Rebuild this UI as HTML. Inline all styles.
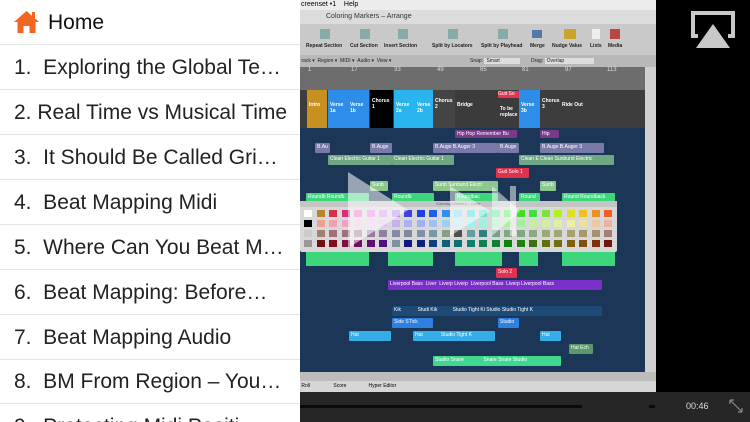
<!DOCTYPE html>
<html><head><meta charset="utf-8"><style>
*{margin:0;padding:0;box-sizing:border-box}
html{overflow:hidden;width:750px;height:422px}
body{width:750px;height:422px;overflow:hidden;background:#000;position:relative;font-family:"Liberation Sans",sans-serif}
.a{position:absolute}
#side{left:0;top:0;width:300px;height:422px;background:#fff;overflow:hidden}
.row{position:absolute;left:0;width:300px;height:45px;border-bottom:1px solid #e4e4e4;font-size:21px;color:#222;line-height:45px;padding-left:14px;white-space:nowrap;overflow:hidden}
.r{position:absolute;font-size:5px;color:#fff;padding:1px 2px;overflow:hidden;white-space:nowrap;border-radius:1px}
.m{position:absolute;top:90px;height:38px;font-size:5px;font-weight:bold;color:#fff;padding:12px 2px;overflow:hidden}
.sw{position:absolute;width:8px;height:7px}
</style></head><body>
<div id="side" class="a">
 <div class="row" style="top:0;padding-left:48px;font-size:21px;color:#111">Home
  <svg class="a" style="left:14px;top:11px" width="25" height="22" viewBox="0 0 25 22"><path d="M12.5 0 L25 11 L21.5 11 L21.5 22 L15.5 22 L15.5 15 L9.5 15 L9.5 22 L3.5 22 L3.5 11 L0 11 Z" fill="#f26522"/><rect x="18" y="1" width="3" height="6" fill="#f26522"/></svg>
 </div>
 <div class="row" style="top:45px">1.&nbsp; Exploring the Global Te…</div>
 <div class="row" style="top:90px">2.&nbsp;Real Time vs Musical Time</div>
 <div class="row" style="top:135px">3.&nbsp; It Should Be Called Gri…</div>
 <div class="row" style="top:180px">4.&nbsp; Beat Mapping Midi</div>
 <div class="row" style="top:225px">5.&nbsp; Where Can You Beat M…</div>
 <div class="row" style="top:270px">6.&nbsp; Beat Mapping: Before…</div>
 <div class="row" style="top:315px">7.&nbsp; Beat Mapping Audio</div>
 <div class="row" style="top:359px">8.&nbsp; BM From Region – You…</div>
 <div class="row" style="top:404px;height:18px;border:0">9.&nbsp; Protecting Midi Positi…</div>
</div>
<div id="vid" class="a" style="left:300px;top:0;width:356px;height:392px;background:#1c3657;overflow:hidden">
 <div class="a" style="left:0;top:0;width:356px;height:10px;background:#ececec;font-size:7px;padding-left:1px;line-height:10px">creenset •1 &nbsp;&nbsp; Help</div>
 <div class="a" style="left:0;top:10px;width:356px;height:14px;background:#dcdcdc;font-size:7px;padding-left:26px;line-height:14px;color:#333">Coloring Markers – Arrange</div>
 <div class="a" style="left:0;top:24px;width:356px;height:31px;background:#c9c9c9;font-size:5px;font-weight:bold;color:#222">
  <span class="a" style="left:6px;top:19px">Repeat Section</span><span class="a" style="left:50px;top:19px">Cut Section</span><span class="a" style="left:84px;top:19px">Insert Section</span><span class="a" style="left:132px;top:19px">Split by Locators</span><span class="a" style="left:181px;top:19px">Split by Playhead</span><span class="a" style="left:230px;top:19px">Merge</span><span class="a" style="left:252px;top:19px">Nudge Value</span><span class="a" style="left:290px;top:19px">Lists</span><span class="a" style="left:308px;top:19px">Media</span>
  <div class="a" style="left:20px;top:5px;width:10px;height:10px;background:#8aa"></div><div class="a" style="left:60px;top:5px;width:10px;height:10px;background:#8aa"></div><div class="a" style="left:98px;top:5px;width:10px;height:10px;background:#8aa"></div><div class="a" style="left:148px;top:5px;width:10px;height:10px;background:#8aa"></div><div class="a" style="left:198px;top:5px;width:10px;height:10px;background:#8aa"></div><div class="a" style="left:232px;top:6px;width:10px;height:8px;background:#5577aa"></div><div class="a" style="left:264px;top:5px;width:12px;height:10px;background:#c9a530"></div><div class="a" style="left:292px;top:5px;width:8px;height:10px;background:#eee"></div><div class="a" style="left:310px;top:5px;width:10px;height:10px;background:#b44"></div>
 </div>
 <div class="a" style="left:0;top:55px;width:356px;height:12px;background:#b8b8b8;font-size:5px;line-height:12px;color:#222">&nbsp;rack ▾ &nbsp;Region ▾ &nbsp;MIDI ▾ &nbsp;Audio ▾ &nbsp;View ▾<span class="a" style="left:170px">Snap: <span style="background:#ddd;padding:0 20px 0 2px">Smart</span></span><span class="a" style="left:231px">Drag: <span style="background:#ddd;padding:0 30px 0 2px">Overlap</span></span></div>
 <div class="a" style="left:0;top:67px;width:345px;height:23px;background:#6d6d6d;font-size:6px;color:#ddd">
  <span class="a" style="left:8px">1</span><span class="a" style="left:51px">17</span><span class="a" style="left:94px">33</span><span class="a" style="left:137px">49</span><span class="a" style="left:180px">65</span><span class="a" style="left:222px">81</span><span class="a" style="left:265px">97</span><span class="a" style="left:307px">113</span></div>
 <div class="a" style="left:0;top:90px;width:345px;height:38px;background:#3d3d3d"></div>
 <div class="m" style="left:7px;width:20px;background:#c8901f">Intro</div>
 <div class="m" style="left:28px;width:20px;background:#2d8de8">Verse 1a</div>
 <div class="m" style="left:48px;width:21px;background:#2d8de8">Verse 1b</div>
 <div class="m" style="left:70px;width:23px;background:#000;padding-top:8px">Chorus 1</div>
 <div class="m" style="left:94px;width:21px;background:#29b4ee">Verse 2a</div>
 <div class="m" style="left:115px;width:18px;background:#29b4ee">Verse 2b</div>
 <div class="m" style="left:133px;width:22px;background:#444;padding-top:8px">Chorus 2</div>
 <div class="m" style="left:155px;width:43px;background:#3b3b3b">Bridge</div>
 <div class="m" style="left:198px;width:21px;background:#3b3b3b;padding-top:16px">To be replace</div>
 <div class="a" style="left:198px;top:91px;width:21px;height:7px;background:#e8334f;font-size:5px;color:#fff">Guit So</div>
 <div class="m" style="left:219px;width:21px;background:#2d8de8">Verse 3b</div>
 <div class="m" style="left:240px;width:20px;background:#3d3d3d;padding-top:8px">Chorus 3</div>
 <div class="m" style="left:260px;width:85px;background:#3d3d3d">Ride Out</div>
 <div class="a" style="left:345px;top:67px;width:11px;height:305px;background:#d0d0d0"></div>
 <div class="r" style="left:155px;top:130px;width:62px;height:8px;background:#7a3a8a">Hip Hop Remember Bu</div>
 <div class="r" style="left:240px;top:130px;width:19px;height:8px;background:#7a3a8a">Hip</div>
 <div class="r" style="left:15px;top:143px;width:15px;height:10px;background:#7a7aaa">B.Au</div>
 <div class="r" style="left:70px;top:143px;width:22px;height:10px;background:#7a7aaa">B.Auge</div>
 <div class="r" style="left:133px;top:143px;width:65px;height:10px;background:#7a7aaa">B.Auge B.Auger 3</div>
 <div class="r" style="left:198px;top:143px;width:21px;height:10px;background:#7a7aaa">B.Auge</div>
 <div class="r" style="left:240px;top:143px;width:64px;height:10px;background:#7a7aaa">B.Auge B.Auger 3</div>
 <div class="r" style="left:28px;top:155px;width:64px;height:10px;background:#6fa684">Clean Electric Guitar 1</div>
 <div class="r" style="left:92px;top:155px;width:62px;height:10px;background:#6fa684">Clean Electric Guitar 1</div>
 <div class="r" style="left:219px;top:155px;width:95px;height:10px;background:#6fa684">Clean E Clean Sunburst Electric</div>
 <div class="r" style="left:196px;top:168px;width:33px;height:10px;background:#e0324e">Guit Solo 1</div>
 <div class="r" style="left:70px;top:181px;width:18px;height:10px;background:#8ec88e">Sunb</div>
 <div class="r" style="left:133px;top:181px;width:65px;height:10px;background:#8ec88e">Sunb Sunburst Electr</div>
 <div class="r" style="left:240px;top:181px;width:16px;height:10px;background:#8ec88e">Sunb</div>
 <div class="r" style="left:6px;top:193px;width:63px;height:10px;background:#3ed67a">Roundb Roundb</div>
 <div class="r" style="left:92px;top:193px;width:42px;height:10px;background:#3ed67a">Roundb</div>
 <div class="r" style="left:155px;top:193px;width:43px;height:10px;background:#3ed67a">Roundbac</div>
 <div class="r" style="left:219px;top:193px;width:21px;height:10px;background:#3ed67a">Round</div>
 <div class="r" style="left:262px;top:193px;width:53px;height:10px;background:#3ed67a">Round Roundback</div>
 <div class="a" style="left:6px;top:252px;width:63px;height:14px;background:#3ed67a"></div>
 <div class="a" style="left:88px;top:252px;width:45px;height:14px;background:#3ed67a"></div>
 <div class="a" style="left:155px;top:252px;width:47px;height:14px;background:#3ed67a"></div>
 <div class="a" style="left:219px;top:252px;width:19px;height:14px;background:#3ed67a"></div>
 <div class="a" style="left:262px;top:252px;width:53px;height:14px;background:#3ed67a"></div>
 <div class="r" style="left:196px;top:268px;width:21px;height:10px;background:#e0324e">Solo 2</div>
 <div class="r" style="left:88px;top:280px;width:214px;height:10px;background:#7a30c8">Liverpool Bass &nbsp;Liver &nbsp;Liverp Liverp &nbsp;Liverpool Bass &nbsp;Liverp Liverpool Bass</div>
 <div class="r" style="left:92px;top:306px;width:210px;height:10px;background:#1e4a78">Kik &nbsp;&nbsp;&nbsp;&nbsp;&nbsp;&nbsp;&nbsp;&nbsp;&nbsp;&nbsp;&nbsp;Studi Kik &nbsp;&nbsp;&nbsp;&nbsp;&nbsp;&nbsp;&nbsp;&nbsp;&nbsp;&nbsp;Studio Tight Ki Studio Studio Tight K</div>
 <div class="r" style="left:92px;top:318px;width:41px;height:10px;background:#2f7fe0">Side STick</div>
 <div class="r" style="left:198px;top:318px;width:21px;height:10px;background:#2f7fe0">Studio</div>
 <div class="r" style="left:49px;top:331px;width:42px;height:10px;background:#35aee8">Hat</div>
 <div class="r" style="left:113px;top:331px;width:82px;height:10px;background:#35aee8">Hat &nbsp;&nbsp;&nbsp;&nbsp;&nbsp;&nbsp;&nbsp;&nbsp;&nbsp;&nbsp;&nbsp;&nbsp;Studio Tight K</div>
 <div class="r" style="left:240px;top:331px;width:21px;height:10px;background:#35aee8">Hat</div>
 <div class="r" style="left:269px;top:344px;width:24px;height:10px;background:#5a9a6a">Hat Ech</div>
 <div class="r" style="left:133px;top:356px;width:128px;height:10px;background:#40d890">Studio Snare &nbsp;&nbsp;&nbsp;&nbsp;&nbsp;&nbsp;&nbsp;&nbsp;&nbsp;&nbsp;&nbsp;&nbsp;&nbsp;Snare Snare Studio</div>
 <div class="a" style="left:0;top:201px;width:317px;height:51px;background:#d8d8d8;border-radius:2px">
  <div class="a" style="left:0;top:0;width:317px;height:6px;background:#c4c4c4;font-size:4px;color:#555;text-align:center">Coloring Markers – Color</div>
  <div class="a" id="pal" style="left:4px;top:9px"></div>
 </div>
 <svg class="a" style="left:40px;top:170px;z-index:5" width="180" height="80"><path d="M8 2 L8 78 L68 40 Z" fill="rgba(255,255,255,0.55)"/><path d="M110 16 L110 66 L150 41 Z M152 16 L152 66 L180 41 Z" fill="rgba(255,255,255,0.5)"/><rect x="170" y="16" width="6" height="50" fill="rgba(255,255,255,0.5)"/></svg>
 <div class="a" style="left:0;top:372px;width:356px;height:9px;background:#bcbcbc"></div>
 <div class="a" style="left:0;top:381px;width:356px;height:11px;background:#d6d6d6;font-size:5px;line-height:11px">&nbsp;Roll <span style="margin-left:22px">Score</span><span style="margin-left:22px">Hyper Editor</span></div>
</div>
<svg class="a" style="left:688px;top:8px" width="50" height="42" viewBox="0 0 50 42"><path d="M3 3 H47 V30 H40 V26 H43 V7 H7 V26 H10 V30 H3 Z" fill="#c8c8c8"/><path d="M25 16 L42 40 H8 Z" fill="#c8c8c8"/></svg>
<div class="a" style="left:300px;top:392px;width:450px;height:30px;background:#262626">
 <div class="a" style="left:0;top:13px;width:282px;height:3px;background:#0a0a0a"></div>
 <div class="a" style="left:349px;top:13px;width:6px;height:3px;background:#0a0a0a"></div>
 <div class="a" style="left:386px;top:9px;font-size:9px;color:#ddd">00:46</div>
 <svg class="a" style="left:428px;top:6px" width="16" height="16"><path d="M2 2 L14 14 M2 2 V6 M2 2 H6 M14 14 V10 M14 14 H10" stroke="#888" stroke-width="1.2" fill="none"/></svg>
</div>
<script>
var cols=[["#fff","#b8862a","#d8304a","#d83078","#f070c8","#f080e8","#d890f0","#b080f0","#4040e0","#2040e0","#2060e0","#3090f0","#80d8f8","#50d8e0","#60e8d0","#60e8a0","#60f060","#40e020","#40e040","#80e040","#b0f020","#e0e020","#f0c020","#f09020","#f06020"],
["#000","#f0a090","#f0a0b0","#f0a0c0","#f0c0e0","#f0c0f0","#e0c0f0","#c8b0f0","#b0b0f0","#a0b0f0","#a0c0f0","#a0d0f0","#b0e8f8","#a0f0f0","#a0f0e0","#a0f0c0","#b0f0a0","#a0f0a0","#c0f0a0","#d0f0a0","#e0f0a0","#f0f0a0","#f0e0a0","#f0c8a0","#f0b0a0"],
["#ccc","#a08070","#a07078","#a07080","#a07898","#9878a0","#9080a0","#8888a8","#8088a0","#8090a8","#7898a8","#88a080","#505050","#60a0a0","#308080","#70a090","#80a888","#80a880","#90a880","#98a878","#a0a878","#a8a070","#a89868","#a89070","#a08070"],
["#999","#701010","#801020","#801040","#701060","#601070","#501080","#8090a0","#101880","#102080","#104080","#106078","#107070","#108068","#108050","#108030","#108010","#208010","#407010","#607010","#707010","#806010","#805010","#803010","#701810"]];
var h="";cols.forEach(function(r,i){r.forEach(function(c,j){h+='<div class="sw" style="left:'+(j*12.5)+'px;top:'+(i*10)+'px;background:'+c+'"></div>'})});
document.getElementById('pal').innerHTML=h;
</script>
</body></html>
